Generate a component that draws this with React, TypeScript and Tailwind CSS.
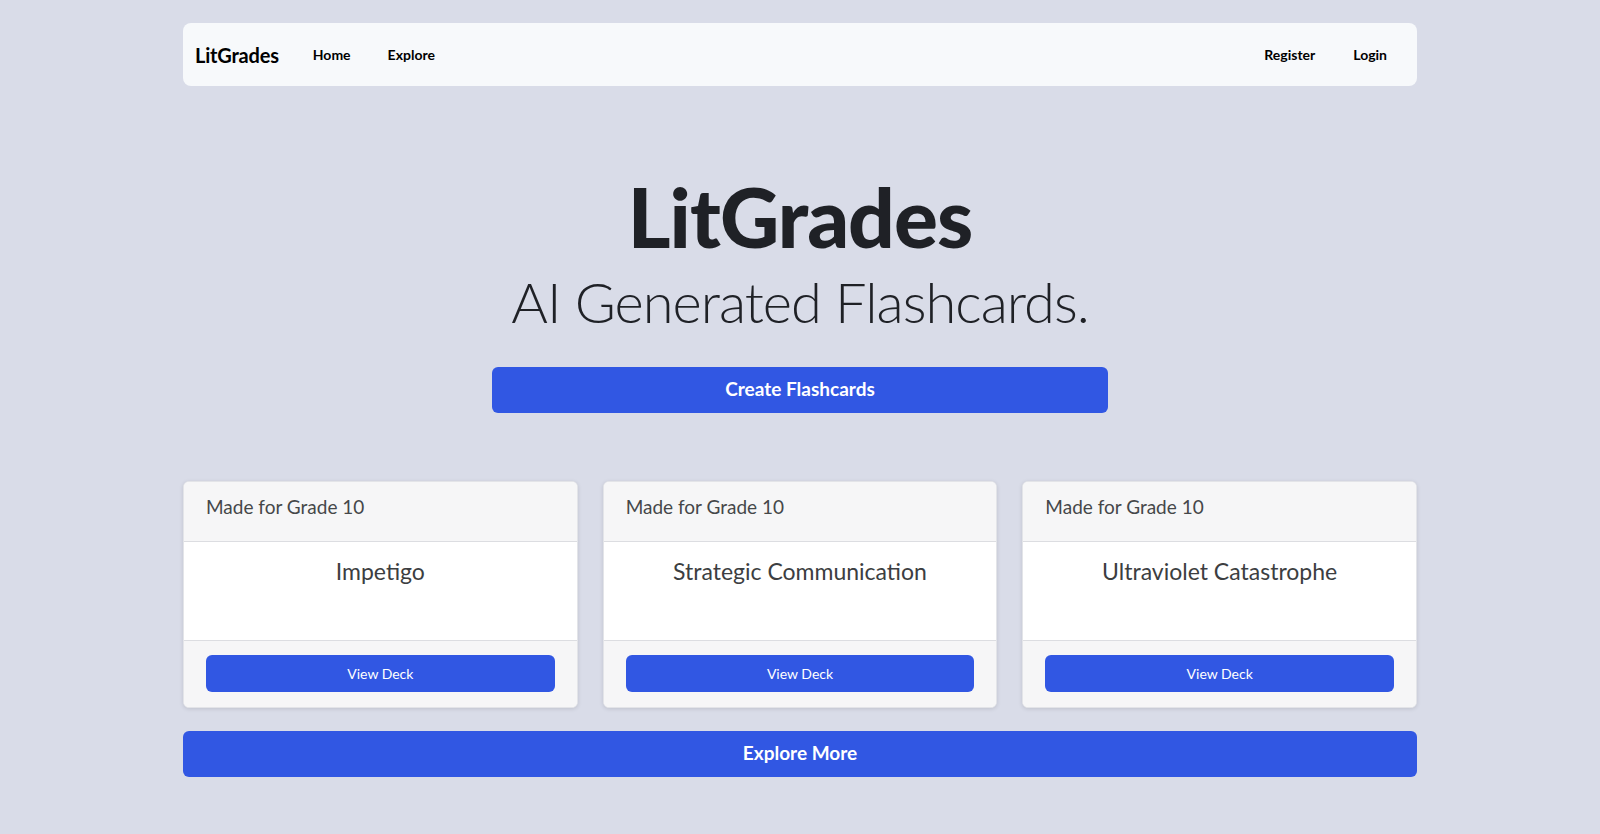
const decks = [
  { grade: 'Made for Grade 10', title: 'Impetigo' },
  { grade: 'Made for Grade 10', title: 'Strategic Communication' },
  { grade: 'Made for Grade 10', title: 'Ultraviolet Catastrophe' },
];

const DeckCard = ({ grade, title }: { grade: string; title: string }) => {
  return (
    <div className="flex flex-col rounded-md border border-[#e3e4e8] bg-white shadow-[0_1px_4px_rgba(0,0,0,0.12)] overflow-hidden">
      <div className="h-[60px] pt-[13px] px-[22px] bg-[#f6f6f7] border-b border-[#dcdde1] text-[19px] leading-[24px] text-[#454749]">
        {grade}
      </div>
      <div className="h-[98px] pt-[12px] text-center text-[23px] text-[#3c3e41]">{title}</div>
      <div className="h-[67px] flex items-center px-[22px] bg-[#f6f6f7] border-t border-[#dcdde1]">
        <button className="w-full h-[37px] rounded-md bg-[#3157e3] text-white text-[14px]">View Deck</button>
      </div>
    </div>
  );
};

const App = () => {
  return (
    <div className="min-h-[834px] bg-[#d9dce8] pt-[23px] font-['Lato',sans-serif] text-[#212529]">
      <div className="max-w-[1234px] mx-auto">
        {/* Navbar */}
        <nav className="h-[63px] rounded-lg bg-[#f7f9fb] flex items-center pl-[12px] pr-[30px]">
          <span className="text-[20px] font-bold text-black tracking-[-0.2px]">LitGrades</span>
          <a className="ml-[34px] text-[14px] font-bold text-black">Home</a>
          <a className="ml-[37px] text-[14px] font-bold text-black">Explore</a>
          <div className="ml-auto flex items-center gap-[38px]">
            <a className="text-[14px] font-bold text-black">Register</a>
            <a className="text-[14px] font-bold text-black">Login</a>
          </div>
        </nav>

        {/* Hero */}
        <section className="flex flex-col items-center pt-[81px]">
          <h1 className="text-[82px] leading-[1.2] font-black text-[#1f2126] tracking-[-1px]">LitGrades</h1>
          <p className="mt-[3px] text-[56px] leading-[1.2] font-light text-[#1f2126] tracking-[-1px]">
            AI Generated Flashcards.
          </p>
          <button className="mt-[31px] w-[616px] h-[46px] rounded-md bg-[#3157e3] text-white text-[19px] font-bold">
            Create Flashcards
          </button>
        </section>

        {/* Decks */}
        <div className="mt-[68px] grid grid-cols-3 gap-[25px]">
          {decks.map((d) => (
            <DeckCard key={d.title} grade={d.grade} title={d.title} />
          ))}
        </div>

        <button className="mt-[23px] w-full h-[46px] rounded-md bg-[#3157e3] text-white text-[19px] font-bold">
          Explore More
        </button>
      </div>
    </div>
  );
};

export default App;
